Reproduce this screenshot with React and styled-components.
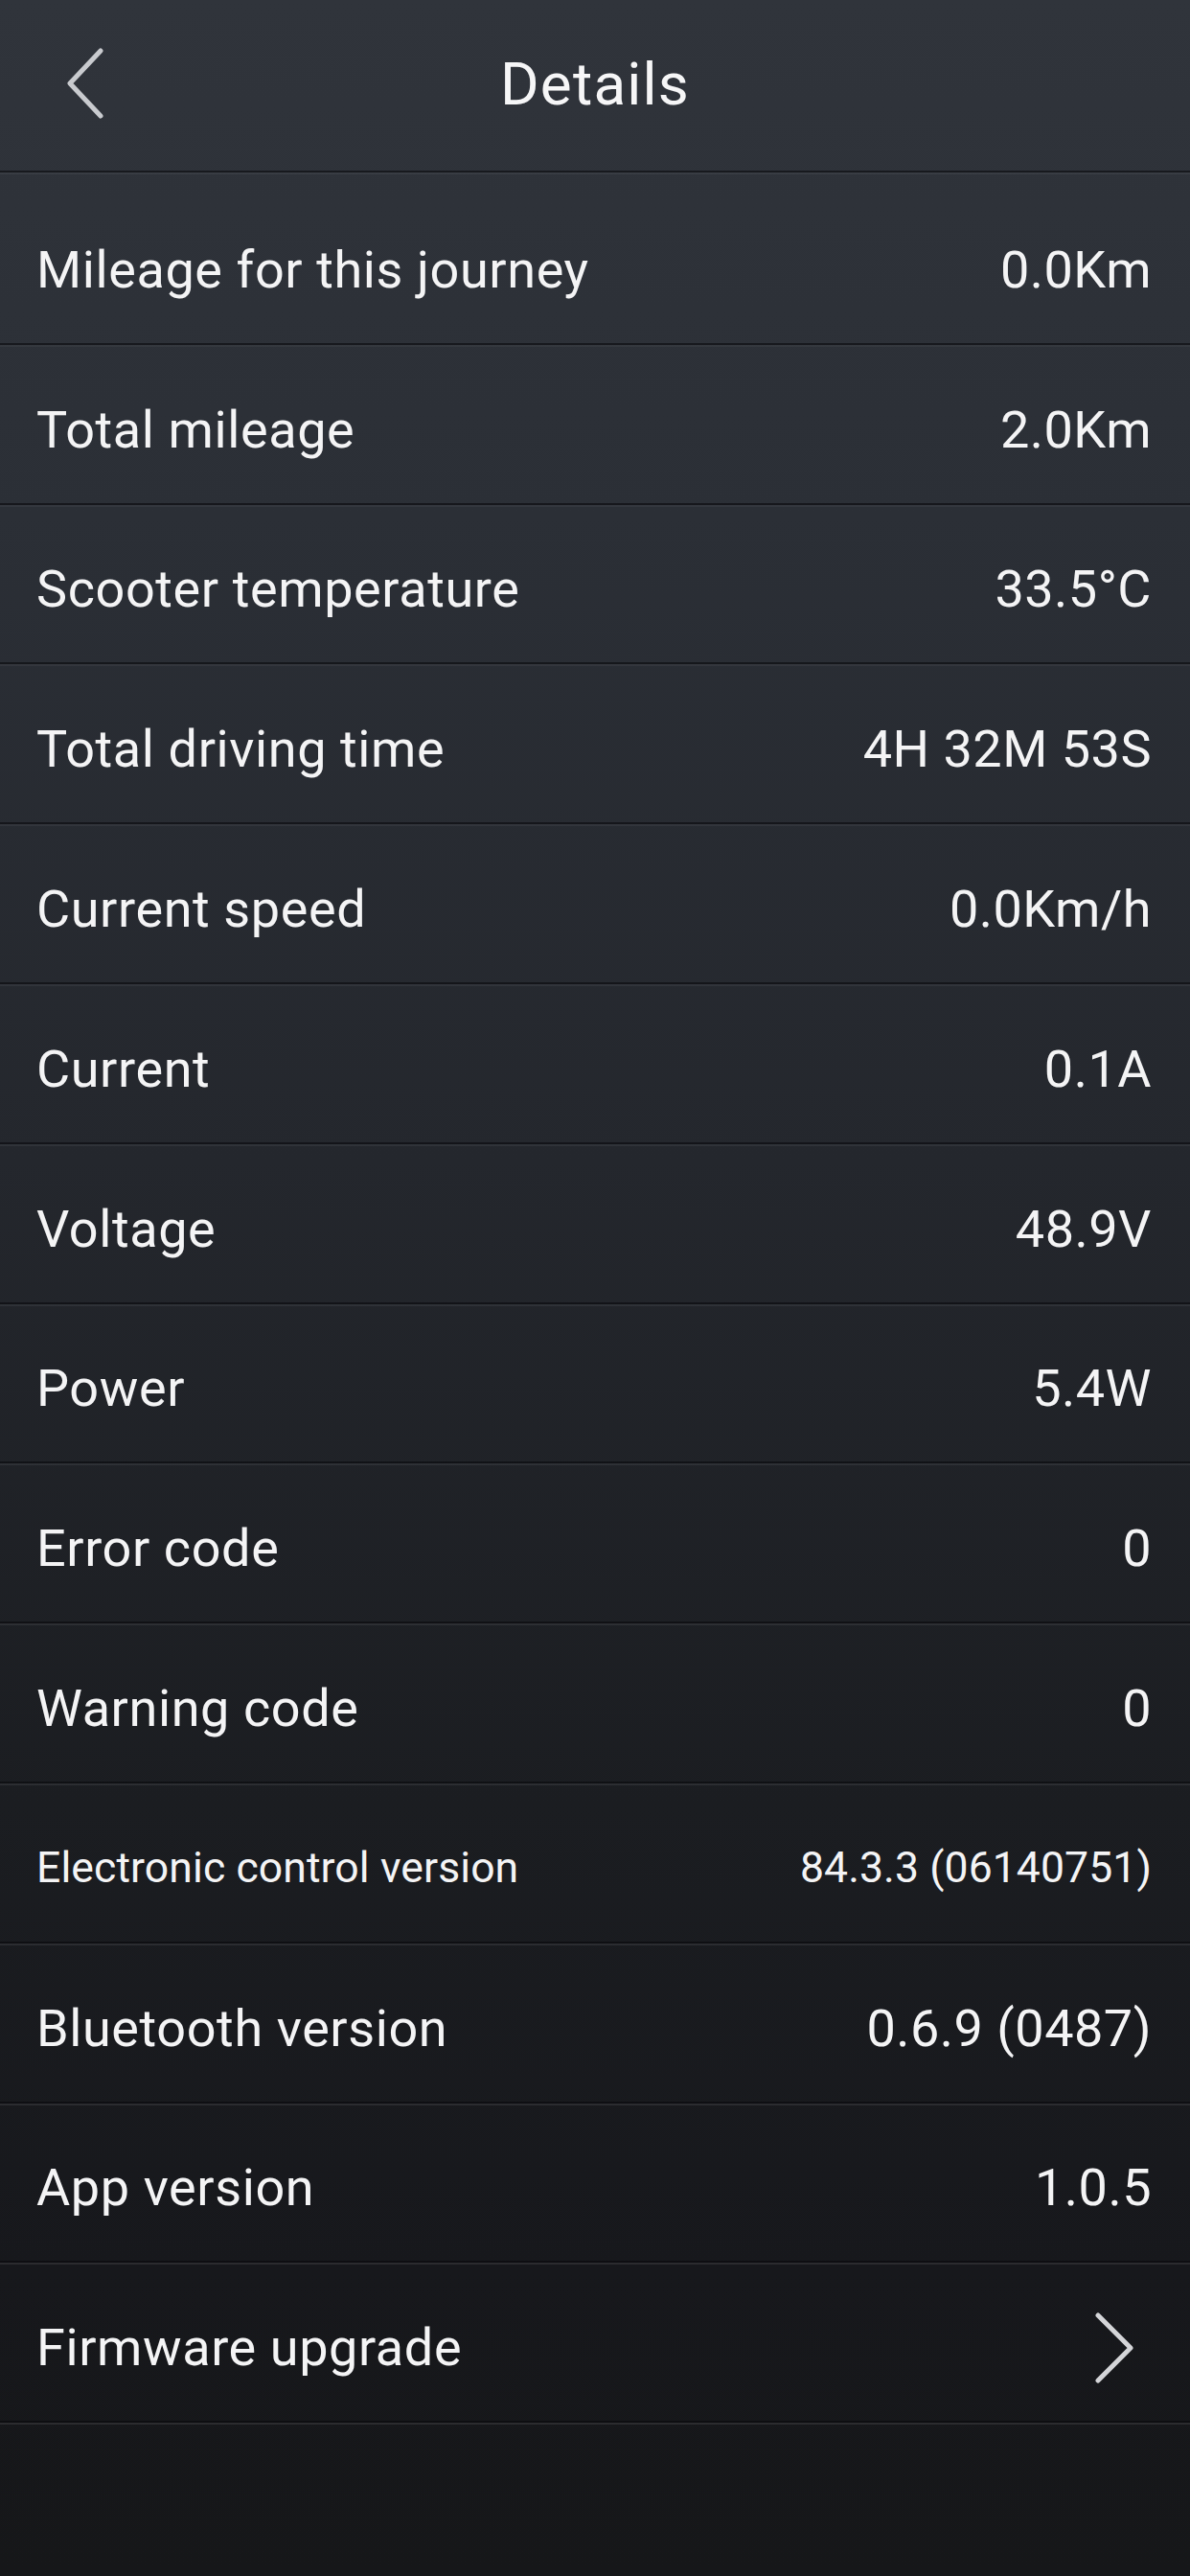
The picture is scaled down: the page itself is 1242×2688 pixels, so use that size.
import React from "react";
import styled, { createGlobalStyle } from "styled-components";

const GlobalStyle = createGlobalStyle`
  html, body {
    margin: 0;
    padding: 0;
    background: #17181c;
  }
  * { box-sizing: border-box; }
`;

const Page = styled.div`
  width: 1242px;
  min-height: 2688px;
  background: linear-gradient(180deg, #30343b 0%, #2b2f36 20%, #24272d 45%, #1b1d21 70%, #17181c 88%, #161719 100%);
  font-family: Roboto, "Noto Sans", "Liberation Sans", sans-serif;
  color: #f4f4f5;
`;

const Header = styled.header`
  position: relative;
  height: 180px;
  display: grid;
  grid-template-columns: 200px 1fr 200px;
  align-items: center;
  padding-bottom: 4px;
  border-bottom: 2px solid rgba(8, 9, 12, 0.6);
  box-shadow: 0 2px 0 rgba(255, 255, 255, 0.05);
`;

const BackButton = styled.button`
  justify-self: start;
  margin-left: 64px;
  width: 50px;
  height: 80px;
  padding: 0;
  border: none;
  background: transparent;
  display: flex;
  align-items: center;
  justify-content: center;
  color: #c9cbcf;
`;

const Title = styled.h1`
  margin: 0;
  text-align: center;
  font-size: 62px;
  font-weight: 400;
  letter-spacing: 1.2px;
  color: #f6f6f7;
`;

const List = styled.ul`
  list-style: none;
  margin: 0;
  padding: 13px 0 0;
`;

const Row = styled.li`
  height: 166.8px;
  display: flex;
  align-items: center;
  justify-content: space-between;
  padding: 12px 40px 0 38px;
  border-bottom: 2px solid rgba(8, 9, 12, 0.6);
  box-shadow: 0 2px 0 rgba(255, 255, 255, ${(p) => p.$glow});
`;

const Label = styled.span`
  font-size: ${(p) => (p.$small ? "44.5px" : "54px")};
  letter-spacing: ${(p) => (p.$small ? "0.1px" : "0.6px")};
  font-weight: 400;
  color: #f4f4f5;
  white-space: nowrap;
`;

const Value = styled.span`
  font-size: ${(p) => (p.$small ? "44.5px" : "54px")};
  letter-spacing: ${(p) => (p.$small ? "0.1px" : "0.5px")};
  font-weight: 400;
  color: #f4f4f5;
  white-space: nowrap;
`;

const Chevron = styled.span`
  display: flex;
  align-items: center;
  margin-right: 18px;
  color: #d4d5d8;
`;

const rows = [
  { label: "Mileage for this journey", value: "0.0Km" },
  { label: "Total mileage", value: "2.0Km" },
  { label: "Scooter temperature", value: "33.5°C" },
  { label: "Total driving time", value: "4H 32M 53S" },
  { label: "Current speed", value: "0.0Km/h" },
  { label: "Current", value: "0.1A" },
  { label: "Voltage", value: "48.9V" },
  { label: "Power", value: "5.4W" },
  { label: "Error code", value: "0" },
  { label: "Warning code", value: "0" },
  { label: "Electronic control version", value: "84.3.3 (06140751)", small: true },
  { label: "Bluetooth version", value: "0.6.9 (0487)" },
  { label: "App version", value: "1.0.5" },
  { label: "Firmware upgrade", arrow: true },
];

export default function App() {
  return (
    <>
      <GlobalStyle />
      <Page>
        <Header>
          <BackButton aria-label="Back">
            <svg width="40" height="74" viewBox="0 0 40 74" fill="none">
              <polyline
                points="36,3 4,37 36,71"
                stroke="currentColor"
                strokeWidth="5"
                strokeLinecap="round"
                strokeLinejoin="round"
              />
            </svg>
          </BackButton>
          <Title>Details</Title>
          <div />
        </Header>
        <List>
          {rows.map((r, i) => (
            <Row key={r.label} $glow={(0.04 + i * 0.004).toFixed(3)}>
              <Label $small={r.small}>{r.label}</Label>
              {r.arrow ? (
                <Chevron>
                  <svg width="42" height="74" viewBox="0 0 42 74" fill="none">
                    <polyline
                      points="4,3 38,37 4,71"
                      stroke="currentColor"
                      strokeWidth="5"
                      strokeLinecap="round"
                      strokeLinejoin="round"
                    />
                  </svg>
                </Chevron>
              ) : (
                <Value $small={r.small}>{r.value}</Value>
              )}
            </Row>
          ))}
        </List>
      </Page>
    </>
  );
}
